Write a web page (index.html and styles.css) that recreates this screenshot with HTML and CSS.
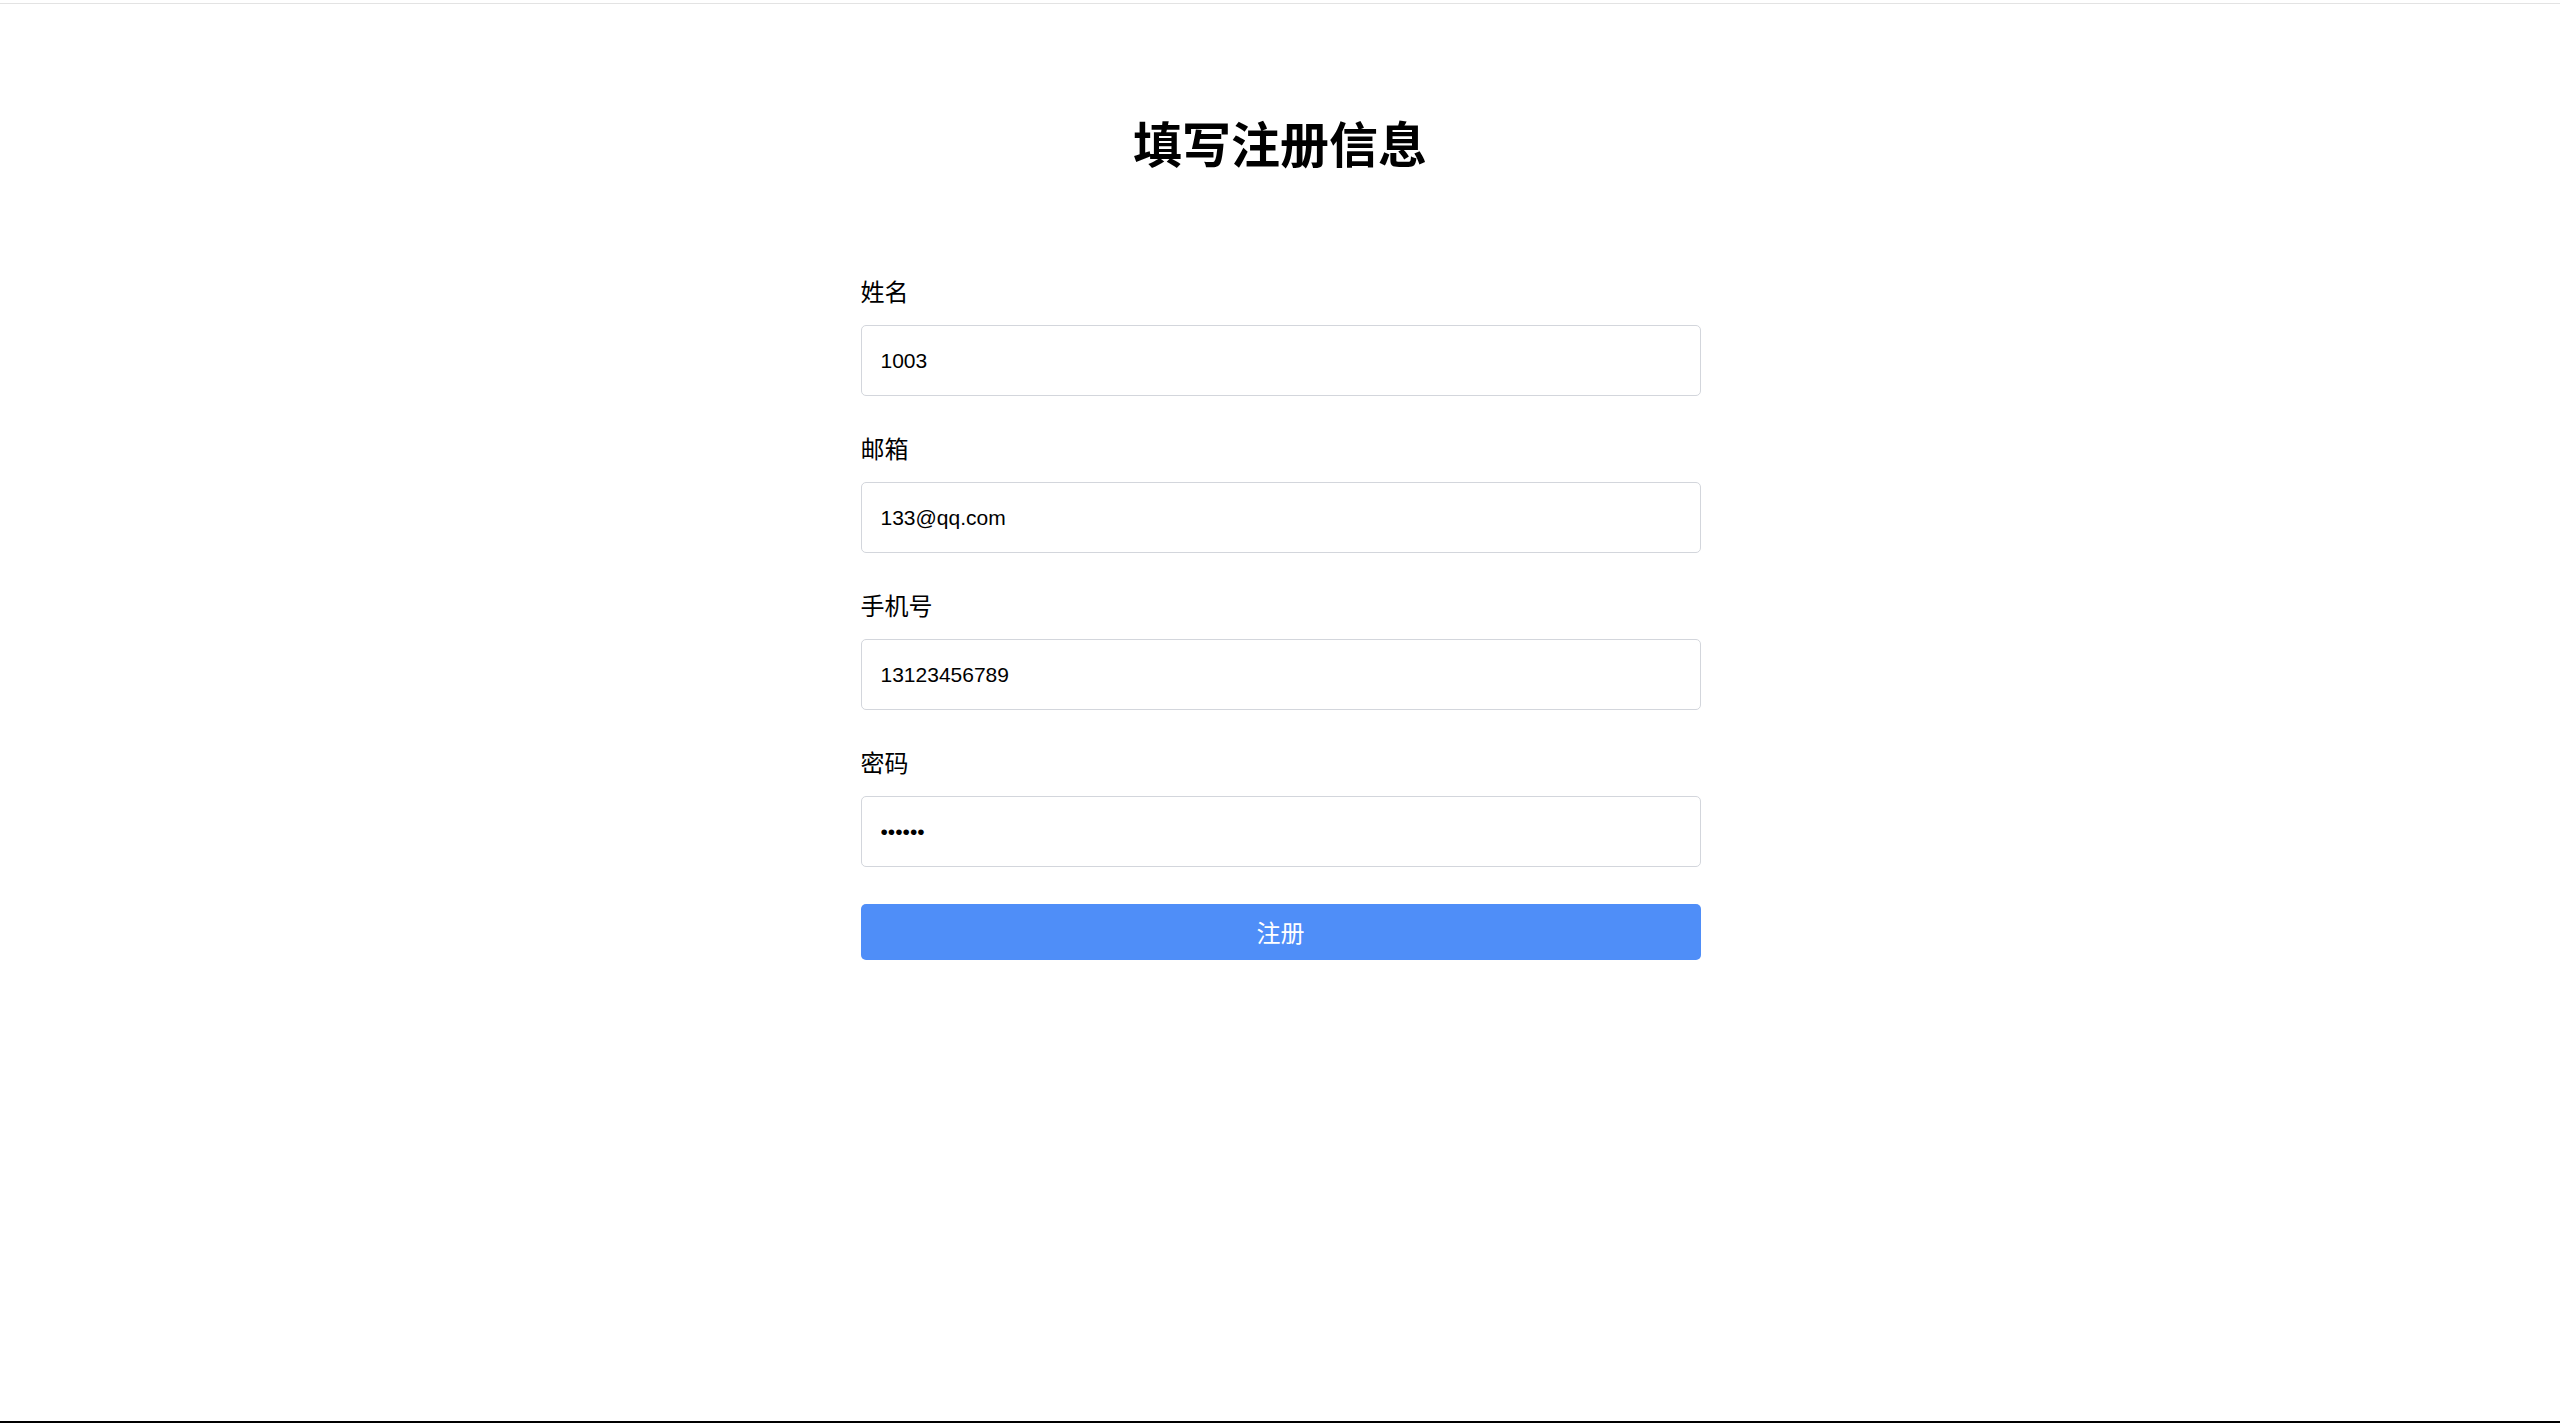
FILE: index.html
```html
<!DOCTYPE html>
<html lang="zh-CN">
<head>
<meta charset="utf-8">
<title>填写注册信息</title>
<link rel="stylesheet" href="styles.css">
</head>
<body>
<div class="page">
  <div class="top-rule"></div>
  <main class="main">
    <h1 class="title">填写注册信息</h1>
    <form class="form">
      <div class="field">
        <label class="label" for="name">姓名</label>
        <input class="input" id="name" type="text" value="1003">
      </div>
      <div class="field">
        <label class="label" for="email">邮箱</label>
        <input class="input" id="email" type="text" value="133@qq.com">
      </div>
      <div class="field">
        <label class="label" for="phone">手机号</label>
        <input class="input" id="phone" type="text" value="13123456789">
      </div>
      <div class="field">
        <label class="label" for="pwd">密码</label>
        <input class="input" id="pwd" type="password" value="123456">
      </div>
      <button class="submit" type="button">注册</button>
    </form>
  </main>
  <div class="bottom-rule"></div>
</div>
</body>
</html>
```
FILE: styles.css
```css
* { box-sizing: border-box; }
html, body { margin: 0; padding: 0; background: #fff; }
body {
  font-family: "Liberation Sans", "Noto Sans CJK SC", sans-serif;
  color: #000;
}
.page {
  min-height: 100vh;
  display: flex;
  flex-direction: column;
  padding-top: 3px;
}
.top-rule {
  height: 1px;
  background: #e3e3e3;
}
.main {
  flex: 1;
  display: flex;
  flex-direction: column;
  align-items: center;
}
.title {
  margin: 102px 0 0;
  font-family: "Noto Sans CJK SC", sans-serif;
  font-size: 49px;
  line-height: 72px;
  font-weight: 700;
  text-align: center;
}
.form {
  width: 840px;
  margin-top: 97px;
  margin-left: 1px;
  display: flex;
  flex-direction: column;
  gap: 36px;
}
.field {
  display: flex;
  flex-direction: column;
  gap: 18px;
}
.label {
  font-family: "Noto Sans CJK SC", sans-serif;
  font-size: 24px;
  line-height: 32px;
  color: #000;
}
.input {
  height: 71px;
  width: 100%;
  border: 1px solid #d3d6dc;
  border-radius: 5px;
  padding: 0 19px;
  font-family: "Liberation Sans", "Noto Sans CJK SC", sans-serif;
  font-size: 21px;
  color: #000;
  background: #fff;
  outline: none;
}
.submit {
  margin-top: 1px;
  height: 56px;
  width: 100%;
  border: none;
  border-radius: 5px;
  background: #4f8ef8;
  color: #fff;
  font-family: "Noto Sans CJK SC", sans-serif;
  font-size: 24px;
  line-height: 1;
  cursor: pointer;
}
.bottom-rule {
  height: 2px;
  background: #000;
}
```
